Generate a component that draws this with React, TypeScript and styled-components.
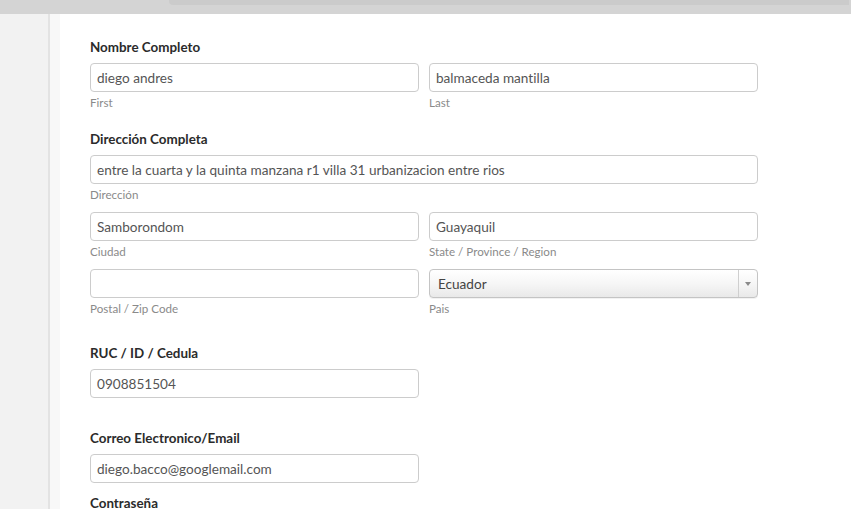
import React from "react";
import styled, { createGlobalStyle } from "styled-components";

const Global = createGlobalStyle`
  html, body { margin: 0; padding: 0; }
  body {
    background: #ffffff;
    font-family: Lato, "Open Sans", "Liberation Sans", sans-serif;
    font-variant-ligatures: none;
    -webkit-font-smoothing: antialiased;
  }
  #root { width: 851px; height: 509px; overflow: hidden; }
`;

const Page = styled.div`
  display: flex;
  flex-direction: column;
  width: 851px;
  height: 509px;
  overflow: hidden;
`;

const TopBar = styled.div`
  height: 14px;
  background: #d4d4d4;
  display: flex;
  flex-shrink: 0;
`;

const TopTab = styled.div`
  margin-left: 169px;
  margin-right: 2px;
  height: 5px;
  flex: 1;
  background: #cbcbcb;
  border-bottom-left-radius: 4px;
`;

const Body = styled.div`
  display: flex;
  flex: 1;
  min-height: 0;
`;

const Sidebar = styled.div`
  width: 48px;
  background: #f2f2f2;
  border-right: 2px solid #e3e3e3;
  flex-shrink: 0;
`;

const Gutter = styled.div`
  width: 10px;
  background: #f8f8f8;
  flex-shrink: 0;
`;

const Main = styled.main`
  flex: 1;
  background: #fff;
  padding-left: 30px;
`;

const Form = styled.form`
  width: 668px;
  display: flex;
  flex-direction: column;
`;

const Section = styled.div<{ $top: number }>`
  margin-top: ${(p) => p.$top}px;
  display: flex;
  flex-direction: column;
`;

const Label = styled.div`
  font-size: 13.4px;
  line-height: 16px;
  font-weight: 700;
  color: #2b2b2b;
  margin-bottom: 8px;
`;

const Row = styled.div<{ $top?: number }>`
  display: grid;
  grid-template-columns: 329px 329px;
  column-gap: 10px;
  margin-top: ${(p) => p.$top ?? 0}px;
`;

const Full = styled.div`
  display: flex;
  flex-direction: column;
`;

const Col = styled.div`
  display: flex;
  flex-direction: column;
`;

const Input = styled.div`
  box-sizing: border-box;
  height: 29px;
  border: 1px solid #cccccc;
  border-radius: 4px;
  background: #fff;
  padding: 0 6px;
  display: flex;
  align-items: center;
  font-size: 13.6px;
  color: #555;
  white-space: nowrap;
  overflow: hidden;
`;

const Select = styled.div`
  box-sizing: border-box;
  height: 29px;
  border: 1px solid #c4c4c4;
  border-radius: 4px;
  background: linear-gradient(#ffffff 0%, #f6f6f6 50%, #e9e9e9 100%);
  display: flex;
  align-items: stretch;
  font-size: 13.6px;
  color: #444;
  box-shadow: 0 1px 0 rgba(0, 0, 0, 0.05);
`;

const SelectText = styled.div`
  flex: 1;
  display: flex;
  align-items: center;
  padding: 0 8px;
`;

const SelectArrow = styled.div`
  width: 18px;
  border-left: 1px solid #cfcfcf;
  display: flex;
  align-items: center;
  justify-content: center;
  &::after {
    content: "";
    width: 0;
    height: 0;
    border-left: 3px solid transparent;
    border-right: 3px solid transparent;
    border-top: 4px solid #8a8a8a;
  }
`;

const Sub = styled.div`
  margin-top: 4px;
  font-size: 11.6px;
  line-height: 14px;
  color: #8a8a8a;
`;

export default function App() {
  return (
    <Page>
      <Global />
      <TopBar>
        <TopTab />
      </TopBar>
      <Body>
        <Sidebar />
        <Gutter />
        <Main>
          <Form>
            <Section $top={25}>
              <Label>Nombre Completo</Label>
              <Row>
                <Col>
                  <Input>diego andres</Input>
                  <Sub>First</Sub>
                </Col>
                <Col>
                  <Input>balmaceda mantilla</Input>
                  <Sub>Last</Sub>
                </Col>
              </Row>
            </Section>

            <Section $top={21}>
              <Label>Dirección Completa</Label>
              <Full>
                <Input>entre la cuarta y la quinta manzana r1 villa 31 urbanizacion entre rios</Input>
                <Sub>Dirección</Sub>
              </Full>
              <Row $top={10}>
                <Col>
                  <Input>Samborondom</Input>
                  <Sub>Ciudad</Sub>
                </Col>
                <Col>
                  <Input>Guayaquil</Input>
                  <Sub>State / Province / Region</Sub>
                </Col>
              </Row>
              <Row $top={10}>
                <Col>
                  <Input />
                  <Sub>Postal / Zip Code</Sub>
                </Col>
                <Col>
                  <Select>
                    <SelectText>Ecuador</SelectText>
                    <SelectArrow />
                  </Select>
                  <Sub>Pais</Sub>
                </Col>
              </Row>
            </Section>

            <Section $top={29}>
              <Label>RUC / ID / Cedula</Label>
              <Row>
                <Input>0908851504</Input>
              </Row>
            </Section>

            <Section $top={32}>
              <Label>Correo Electronico/Email</Label>
              <Row>
                <Input>diego.bacco@googlemail.com</Input>
              </Row>
            </Section>

            <Section $top={12}>
              <Label>Contraseña</Label>
            </Section>
          </Form>
        </Main>
      </Body>
    </Page>
  );
}
